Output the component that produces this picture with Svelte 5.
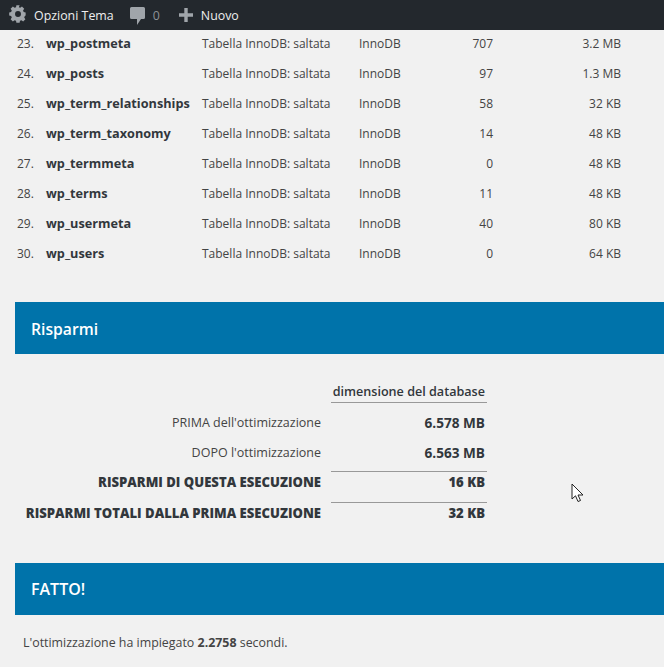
<script>
    const rows = [
        { n: 23, name: "wp_postmeta", records: 707, size: "3.2 MB" },
        { n: 24, name: "wp_posts", records: 97, size: "1.3 MB" },
        { n: 25, name: "wp_term_relationships", records: 58, size: "32 KB" },
        { n: 26, name: "wp_term_taxonomy", records: 14, size: "48 KB" },
        { n: 27, name: "wp_termmeta", records: 0, size: "48 KB" },
        { n: 28, name: "wp_terms", records: 11, size: "48 KB" },
        { n: 29, name: "wp_usermeta", records: 40, size: "80 KB" },
        { n: 30, name: "wp_users", records: 0, size: "64 KB" }
    ];
</script>

<div class="adminbar">
    <div class="item settings">
        <svg width="18" height="18" viewBox="0 0 20 20"><path d="M18.500 11.800V8.200l-2.200-.4c-.2-.6-.4-1.100-.7-1.600l1.300-1.900-2.500-2.500-1.900 1.300c-.5-.3-1-.5-1.600-.7L11.800 0.200H8.200l-.4 2.200c-.6.200-1.100.4-1.600.7L4.300 1.800 1.800 4.300l1.300 1.900c-.3.500-.5 1-.7 1.600l-2.200.4v3.600l2.200.4c.2.600.4 1.100.7 1.600l-1.300 1.900 2.500 2.500 1.900-1.300c.5.300 1 .5 1.600.7l.4 2.200h3.600l.4-2.200c.6-.2 1.100-.4 1.600-.7l1.900 1.300 2.500-2.500-1.300-1.900c.3-.5.5-1 .7-1.600zM10 13.300a3.300 3.300 0 1 1 0-6.600 3.300 3.300 0 0 1 0 6.600z"/></svg>
        <span>Opzioni Tema</span>
    </div>
    <div class="item comments">
        <svg width="15" height="18" viewBox="0 0 15 18"><path d="M1.500 0h12A1.500 1.500 0 0 1 15 1.500v9a1.500 1.500 0 0 1-1.500 1.500H11l-4 6v-6H1.500A1.500 1.500 0 0 1 0 10.500v-9A1.500 1.500 0 0 1 1.500 0z"/></svg>
        <span class="count">0</span>
    </div>
    <div class="item add">
        <svg width="14" height="14" viewBox="0 0 14 14"><path d="M5.300 0h3.400v5.300H14v3.400H8.700V14H5.300V8.700H0V5.300h5.300z"/></svg>
        <span>Nuovo</span>
    </div>
</div>

<div class="page">
    <div class="tables">
        {#each rows as row}
            <div class="row">
                <span class="num">{row.n}.</span>
                <strong class="name">{row.name}</strong>
                <span>Tabella InnoDB: saltata</span>
                <span>InnoDB</span>
                <span class="right">{row.records}</span>
                <span class="right">{row.size}</span>
            </div>
        {/each}
    </div>

    <h2 class="banner savings-banner">Risparmi</h2>

    <div class="savings">
        <div></div>
        <div class="val head">dimensione del database</div>
        <div class="label plain first">PRIMA dell'ottimizzazione</div>
        <div class="val plain first">6.578 MB</div>
        <div class="label plain last">DOPO l'ottimizzazione</div>
        <div class="val plain last">6.563 MB</div>
        <div class="label total">RISPARMI DI QUESTA ESECUZIONE</div>
        <div class="val total line">16 KB</div>
        <div class="label total">RISPARMI TOTALI DALLA PRIMA ESECUZIONE</div>
        <div class="val total line">32 KB</div>
    </div>

    <h2 class="banner done-banner">FATTO!</h2>

    <p class="time">L'ottimizzazione ha impiegato <strong>2.2758</strong> secondi.</p>
</div>

<svg class="cursor" width="14" height="20" viewBox="0 0 14 20"><path d="M1 1v15l3.500-3.200L7 18.500l2.500-1-2.500-5.500h5z" fill="#fff" stroke="#222" stroke-width="1"/></svg>

<style>
    :global(body) {
        margin: 0;
        background: #f1f1f1;
        color: #444;
        font-family: "Open Sans", "Noto Sans", sans-serif;
        font-size: 12px;
    }

    .adminbar {
        position: relative;
        height: 30px;
        background: #23282d;
        color: #eee;
        display: flex;
        align-items: center;
        padding-left: 9px;
        font-size: 12.400px;
    }

    .item {
        display: flex;
        align-items: center;
        gap: 8px;
    }

    .settings {
        gap: 7px;
        margin-right: 16px;
    }

    .settings svg {
        margin-top: -2px;
    }

    .item svg {
        fill: #a0a5aa;
    }

    .comments {
        margin-right: 19px;
    }

    .comments svg {
        margin-top: 1px;
    }

    .count {
        color: #8d9196;
    }

    .page {
        padding-left: 15px;
    }

    .tables {
        margin-top: -2px;
    }

    .row {
        display: grid;
        grid-template-columns: 19px 168px 157px 60px 74px 128px;
        height: 30px;
        align-items: center;
    }

    .num {
        padding-left: 2px;
        white-space: nowrap;
    }

    .name {
        padding-left: 12px;
        white-space: nowrap;
        color: #32373c;
        font-size: 12.700px;
    }

    .right {
        text-align: right;
    }

    .banner {
        margin: 0;
        height: 52px;
        line-height: 52px;
        background: #0073aa;
        color: #fff;
        padding-left: 16px;
        font-size: 16px;
        font-weight: 600;
    }

    .savings-banner {
        margin-top: 34px;
        font-size: 15.700px;
        line-height: 54px;
    }

    .savings {
        display: grid;
        grid-template-columns: 306px 156px;
        column-gap: 10px;
        margin-top: 26px;
    }

    .label {
        text-align: right;
        font-size: 12.500px;
    }

    .val {
        text-align: right;
        padding-right: 2px;
        font-weight: 700;
        color: #32373c;
        font-size: 13.600px;
    }

    .head {
        border-bottom: 1px solid #999;
        font-weight: 600;
        font-size: 12.600px;
        line-height: 22px;
        padding-top: 1px;
        height: 21px;
    }

    .plain {
        line-height: 22px;
        padding-top: 8px;
    }

    .first {
        padding-top: 9px;
    }

    .last {
        padding-bottom: 7px;
    }

    .total {
        line-height: 20px;
        padding-top: 1px;
        padding-bottom: 10px;
        font-weight: 800;
        font-size: 13.100px;
        color: #32373c;
    }

    .line {
        border-top: 1px solid #999;
        padding-top: 0;
    }

    .done-banner {
        margin-top: 30px;
    }

    .time {
        margin: 19px 0 0 8px;
        font-size: 12.400px;
    }

    .cursor {
        position: absolute;
        left: 571px;
        top: 483px;
    }
</style>
